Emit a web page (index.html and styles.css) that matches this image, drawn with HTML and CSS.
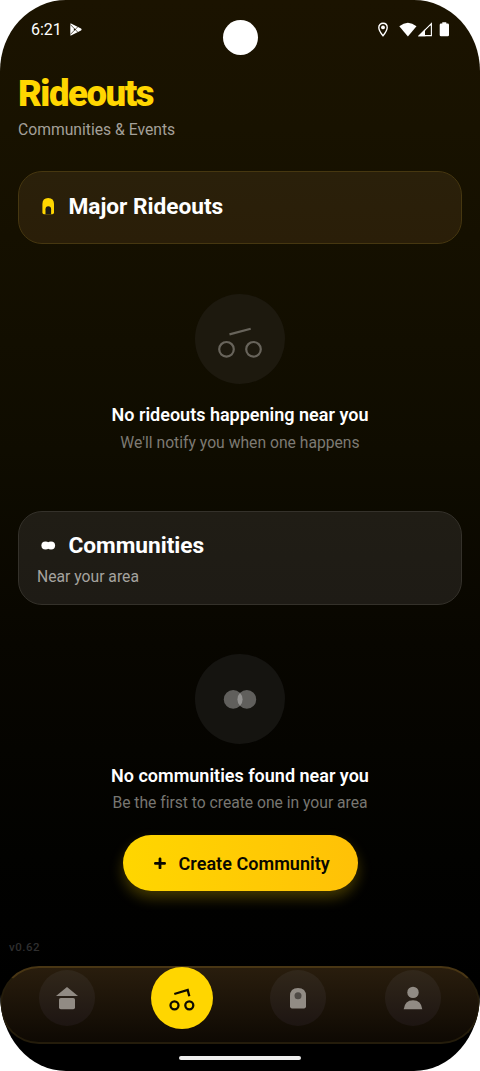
FILE: index.html
```html
<!DOCTYPE html>
<html lang="en">
<head>
<meta charset="utf-8">
<title>Rideouts</title>
<link rel="stylesheet" href="styles.css">
</head>
<body>
<div class="screen">
  <div class="status-bar">
    <span class="clock">6:21</span>
    <svg class="play" width="12" height="13" viewBox="0 0 12 13"><path d="M.3.8Q.3.2 1 .5L11 5.600Q12.200 6.500 11 7.400L1 12.500Q.3 12.800.3 12.200Z" fill="#fff"/><path d="M.3 1.500L7.800 9.200M.3 11.500L7.800 3.800" stroke="#1b1300" stroke-width=".7"/><path d="M4.600 5.500L5.600 6.500L4.600 7.500L3.600 6.500Z" fill="#1b1300"/></svg>
    <span class="camera"></span>
    <svg class="indicators" width="72" height="16" viewBox="0 0 72 16">
      <path d="M5 1.200C2.600 1.200.8 3 .8 5.500C.8 8.700 5 13.700 5 13.700S9.200 8.700 9.200 5.500C9.200 3 7.400 1.200 5 1.200Z" fill="none" stroke="#fff" stroke-width="1.400"/><circle cx="5" cy="5.400" r="1.900" fill="#fff"/>
      <path d="M21.300 4.200Q29.900-2.800 38.500 4.200L29.900 14.400Z" fill="#fff"/>
      <path d="M41.500 13.600H53.300V1.800Z" fill="none" stroke="#fff" stroke-width="1.300"/><path d="M40 14.200L47.500 6.700V14.200Z" fill="#fff"/><path d="M47 8.900V12.900H52.500V3.400Z" fill="#1b1300"/>
      <path d="M64.300.3H68.300V1.600H69.700Q71 1.600 71 2.900V13Q71 14.300 69.700 14.300H63Q61.700 14.300 61.700 13V2.900Q61.700 1.600 63 1.600H64.300Z" fill="#fff"/>
    </svg>
  </div>

  <header class="header">
    <h1 class="page-title">Rideouts</h1>
    <p class="page-subtitle">Communities &amp; Events</p>
  </header>

  <main class="content">
    <section class="card card-major">
      <div class="card-heading">
        <svg width="22" height="22" viewBox="0 0 22 22"><path d="M5.400 8Q5.400 2 11.200 2T17 8V16.600Q17 18.200 15.400 18.200H7Q5.400 18.200 5.400 16.600Z" fill="#ffd600"/><path d="M8.500 18.300V13.300Q8.500 10.200 11.300 10.200T14.100 13.300V18.300Z" fill="#1b1a18"/></svg>
        <h2 class="card-title">Major Rideouts</h2>
      </div>
    </section>

    <section class="empty empty-rideouts">
      <div class="empty-icon">
        <svg width="90" height="90" viewBox="0 0 90 90"><g fill="none" stroke="#68645b" stroke-width="2.200"><circle cx="31.500" cy="55.300" r="7.300"/><circle cx="58.500" cy="55.300" r="7.300"/><path d="M34.500 40.400L55.700 34.800"/></g></svg>
      </div>
      <h3 class="empty-title">No rideouts happening near you</h3>
      <p class="empty-text">We'll notify you when one happens</p>
    </section>

    <section class="card card-communities">
      <div class="card-heading">
        <svg width="22" height="22" viewBox="0 0 22 22"><circle cx="8.500" cy="10.500" r="4.100" fill="#fff"/><circle cx="14" cy="10.500" r="4.100" fill="#fff"/></svg>
        <h2 class="card-title">Communities</h2>
      </div>
      <p class="card-text">Near your area</p>
    </section>

    <section class="empty empty-communities">
      <div class="empty-icon dim">
        <svg width="90" height="90" viewBox="0 0 90 90"><circle cx="38.200" cy="45.400" r="9.400" fill="#fff" fill-opacity=".32"/><circle cx="51.800" cy="45.400" r="9.400" fill="#fff" fill-opacity=".32"/></svg>
      </div>
      <h3 class="empty-title found">No communities found near you</h3>
      <p class="empty-text first">Be the first to create one in your area</p>
      <button class="create">
        <svg width="12" height="12" viewBox="0 0 12 12"><path d="M6 1.800V11M1.400 6.400H10.600" stroke="#090800" stroke-width="2.800" stroke-linecap="round"/></svg>
        <span class="create-label">Create Community</span>
      </button>
    </section>
  </main>

  <p class="version">v0.62</p>
  <nav class="tabs">
    <a class="tab"><svg width="56" height="56" viewBox="0 0 56 56"><path d="M28 17L39 26H17Z"/><rect x="20" y="28" width="16" height="11.300" rx="1.800"/></svg></a>
    <a class="tab active"><svg width="62" height="62" viewBox="0 0 62 62"><g fill="none" stroke="#0d0b00" stroke-width="2.300"><circle cx="23.500" cy="38.300" r="4"/><circle cx="38.300" cy="38.300" r="4"/><path d="M23.300 27L36.700 22.900L38.300 29.200"/></g></svg></a>
    <a class="tab"><svg width="56" height="56" viewBox="0 0 56 56"><path d="M20 26Q20 18 28 18T36 26V36.600Q36 38.400 34.200 38.400H21.800Q20 38.400 20 36.600Z"/><circle class="hole" cx="28" cy="25.800" r="3.500"/></svg></a>
    <a class="tab"><svg width="56" height="56" viewBox="0 0 56 56"><circle cx="28" cy="22.400" r="5.700"/><path d="M18.700 39.300Q19.800 30.200 28 30.200T37.300 39.300Z"/></svg></a>
  </nav>
  <div class="gesture"><span class="gesture-bar"></span></div>
</div>
</body>
</html>
```

FILE: styles.css
```css
* { box-sizing: border-box; }
body { margin: 0; background: #fff; font-family: Roboto, "Liberation Sans", sans-serif; color: #fff; }
h1, h2, h3, p { margin: 0; white-space: nowrap; }
svg { display: block; flex: none; }
.screen { position: relative; width: 480px; height: 1071px; display: flex; flex-direction: column; overflow: hidden; border-radius: 66px 66px 66px 66px / 71px 71px 76px 76px; background: linear-gradient(180deg, #1b1300 0%, #181200 12%, #0f0c00 42%, #080600 60%, #020200 80%, #000 92%); }
.status-bar { height: 58px; display: flex; align-items: center; padding: 1px 30px 0 31px; }
.clock { font-size: 16px; line-height: 20px; }
.play { margin-left: 8px; }
.camera { position: absolute; left: 222.5px; top: 20px; width: 35px; height: 35px; border-radius: 50%; background: #fff; }
.indicators { margin-left: auto; }
.header { padding: 14px 18px 0; height: 113px; }
.page-title { font-size: 36.5px; line-height: 44px; font-weight: 900; letter-spacing: -1.45px; color: #ffd600; }
.page-subtitle { margin-top: 3px; font-size: 15.7px; line-height: 22px; color: #a4a099; }
.content { padding: 0 18px; }
.card { border-radius: 24px; border: 1px solid; padding: 0 18px; }
.card-major { height: 73px; padding-top: 20px; background: linear-gradient(180deg, #2a200a, #2a1e08); border-color: #463710; }
.card-communities { height: 94px; padding-top: 19px; background: linear-gradient(180deg, #201d15, #1e1b15); border-color: #34312a; }
.card-heading { display: flex; align-items: center; gap: 9.5px; height: 30px; }
.card-title { font-size: 22.7px; line-height: 30px; font-weight: 700; letter-spacing: -.03px; }
.card-text { margin-top: 5px; font-size: 15.7px; line-height: 22px; color: #a5a39f; }
.empty { display: flex; flex-direction: column; align-items: center; }
.empty-rideouts { height: 267px; padding-top: 50px; }
.empty-communities { padding-top: 49px; }
.empty-icon { width: 90px; height: 90px; border-radius: 50%; background: #1d190e; }
.empty-icon.dim { background: #151410; }
.empty-title { margin-top: 19px; font-size: 18px; line-height: 24px; font-weight: 600; }
.empty-title.found { margin-top: 20px; }
.empty-text { margin-top: 5px; font-size: 15.7px; line-height: 22px; color: #7d7a73; }
.empty-text.first { margin-top: 4px; color: #777671; letter-spacing: -.02px; }
.create { margin-top: 21px; width: 235px; height: 56px; border: 0; border-radius: 28px; padding: 0 0 0 31px; display: flex; align-items: center; gap: 13px; font: 600 18px/24px Roboto, sans-serif; color: #090800; background: linear-gradient(90deg, #ffd600, #ffc107); box-shadow: 0 7px 14px rgba(255, 214, 0, .26); white-space: nowrap; }
.create-label { padding-top: 2px; letter-spacing: .04px; }
.version { margin: auto 0 0 9px; padding-bottom: 12px; font-size: 11.5px; line-height: 14px; font-weight: 500; letter-spacing: .5px; color: #2f2f2f; }
.tabs { height: 78px; border: 2px solid #241c0b; border-top-color: #493614; border-radius: 39px; background: linear-gradient(180deg, #291d0d, #0e0903); display: grid; grid-template-columns: repeat(4, 115.500px); justify-content: center; justify-items: center; align-items: start; padding: 1px 0 0 0; }
.tab { width: 56px; height: 56px; margin-top: 1px; border-radius: 50%; background: linear-gradient(180deg, #31271a, #1d1512); }
.tab svg { fill: #918b84; }
.tab .hole { fill: #4f4a45; }
.tab.active { width: 62px; height: 62px; margin-top: -2px; background: #ffd600; }
.gesture { height: 27px; display: flex; align-items: center; justify-content: center; }
.gesture-bar { width: 122px; height: 4px; border-radius: 2px; background: #eee; }
```
